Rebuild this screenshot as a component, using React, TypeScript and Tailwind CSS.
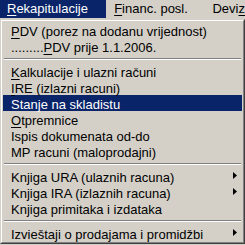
import React from 'react';

type Item =
  | { sep: true }
  | { sep?: false; label: React.ReactNode; sub?: boolean; active?: boolean };

const U = ({ children }: { children: React.ReactNode }) => (
  <span className="underline underline-offset-[2px] decoration-1">{children}</span>
);

const items: Item[] = [
  { label: <><U>P</U>DV (porez na dodanu vrijednost)</> },
  { label: <>.........<U>P</U>DV prije 1.1.2006.</> },
  { sep: true },
  { label: <><U>K</U>alkulacije i ulazni računi</> },
  { label: <><U>I</U>RE (izlazni racuni)</> },
  { label: <>Stanje na skladistu</>, active: true },
  { label: <><U>O</U>tpremnice</> },
  { label: <>Ispis dokumenata od-do</> },
  { label: <>MP racuni (maloprodajni)</> },
  { sep: true },
  { label: <>Knjiga URA (ulaznih racuna)</>, sub: true },
  { label: <>Knjiga IRA (izlaznih racuna)</>, sub: true },
  { label: <>Knjiga primitaka i izdataka</> },
  { sep: true },
  { label: <>Izvieštaji o prodajama i promidžbi</>, sub: true },
];

export default function App() {
  return (
    <div
      className="w-[245px] h-[245px] overflow-hidden bg-[#d4d0c8] text-[13px] leading-[16px] text-black"
      style={{ fontFamily: '"Liberation Sans", Arial, sans-serif' }}
    >
      {/* menu bar */}
      <div className="flex h-[19px]">
        <div className="w-[108px] h-[18px] bg-[#0a246a] text-white pl-[7px] pt-[1px]">
          <U>R</U>ekapitulacije
        </div>
        <div className="w-[100px] h-[18px] pl-[8px] pt-[1px]">
          <U>F</U>inanc. posl.
        </div>
        <div className="h-[18px] pl-[8px] pt-[1px] whitespace-nowrap">
          Devi<U>z</U>
        </div>
      </div>

      {/* dropdown */}
      <div className="border border-t-[#d4d0c8] border-l-[#d4d0c8] border-r-[#404040] border-b-[#404040]">
        <div className="border border-t-white border-l-white border-r-[#808080] border-b-[#808080] p-px">
          {items.map((it, i) =>
            it.sep ? (
              <div key={i} className="h-[9px] flex flex-col justify-center px-px">
                <div className="h-px bg-[#808080]" />
                <div className="h-px bg-white" />
              </div>
            ) : (
              <div
                key={i}
                className={`h-[16px] flex items-start pl-[8px] pr-[5px] whitespace-nowrap ${
                  it.active ? 'bg-[#0a246a] text-white' : ''
                }`}
              >
                <span className="flex-1 pt-px leading-[17px]">{it.label}</span>
                {it.sub && (
                  <svg width="4" height="7" viewBox="0 0 4 7" className="shrink-0 mt-[4px]">
                    <path d="M0 0 L4 3.5 L0 7 Z" fill="#000" />
                  </svg>
                )}
              </div>
            )
          )}
        </div>
      </div>
    </div>
  );
}
